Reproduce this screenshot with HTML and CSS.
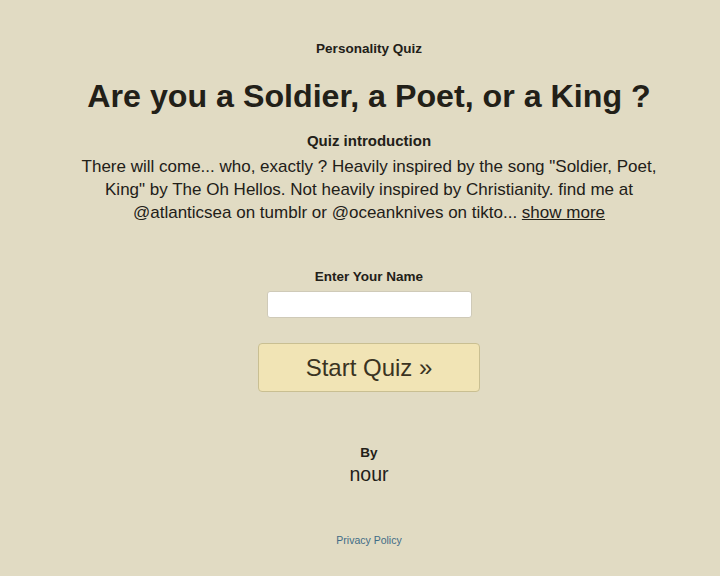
FILE: index.html
```html
<!DOCTYPE html>
<html>
<head>
    <title>Are you a Soldier, a Poet, or a King ?</title>
    <link rel="stylesheet" href="styles.css">
</head>
<body>
    <div class="quiz-page">
        <div class="kicker">Personality Quiz</div>
        <h1>Are you a Soldier, a Poet, or a King ?</h1>
        <div class="intro-title">Quiz introduction</div>
        <p class="intro">There will come... who, exactly ? Heavily inspired by the song "Soldier, Poet, King" by The Oh Hellos. Not heavily inspired by Christianity. find me at @atlanticsea on tumblr or @oceanknives on tikto... <a href="#" class="more">show more</a></p>

        <form class="start-form" onsubmit="return false">
            <label for="name">Enter Your Name</label>
            <input type="text" id="name" class="name-input">
            <button type="submit" class="start-btn">Start Quiz &raquo;</button>
        </form>

        <div class="author">
            <div class="by">By</div>
            <div class="author-name">nour</div>
        </div>

        <a href="#" class="privacy">Privacy Policy</a>
    </div>
</body>
</html>
```

FILE: styles.css
```css
:root {
    --bg: #e1dbc3;
    --text: #222018;
    --btn: #f1e4b5;
    --btn-border: #c9bf92;
}

body {
    margin: 0;
    background: var(--bg);
    color: var(--text);
    font-family: 'Liberation Sans', Arial, sans-serif;
}

/* content sits a little right of the window's centre */
.quiz-page {
    display: flex;
    flex-direction: column;
    align-items: center;
    text-align: center;
    padding: 40px 0 0 18px;
}

.kicker {
    font-size: 13.5px;
    font-weight: bold;
    line-height: 18px;
}

h1 {
    margin: 19px 0 0;
    font-size: 32.2px;
    line-height: 38px;
    font-weight: bold;
}

.intro-title {
    margin-top: 17px;
    font-size: 15px;
    font-weight: bold;
    line-height: 18px;
}

.intro {
    margin: 5px 0 0;
    width: 600px;
    font-size: 17px;
    line-height: 23px;
}

.more {
    color: var(--text);
}

.start-form {
    display: flex;
    flex-direction: column;
    align-items: center;
    margin-top: 44px;
}

.start-form label {
    font-size: 13.5px;
    font-weight: bold;
    line-height: 18px;
}

.name-input {
    margin-top: 5px;
    width: 205px;
    height: 27px;
    box-sizing: border-box;
    border: 1px solid #cfcab8;
    border-radius: 3px;
    background: #fff;
}

.start-btn {
    margin-top: 25px;
    width: 222px;
    height: 49px;
    background: var(--btn);
    border: 1px solid var(--btn-border);
    border-radius: 4px;
    font-family: 'Liberation Sans', Arial, sans-serif;
    font-size: 24px;
    color: #3a3322;
    cursor: pointer;
}

.author {
    margin-top: 52px;
}

.by {
    font-size: 13.5px;
    font-weight: bold;
    line-height: 18px;
}

.author-name {
    font-size: 19.5px;
    line-height: 25px;
}

.privacy {
    margin-top: 47px;
    font-size: 10.5px;
    color: #3f6b86;
    text-decoration: none;
}
```
